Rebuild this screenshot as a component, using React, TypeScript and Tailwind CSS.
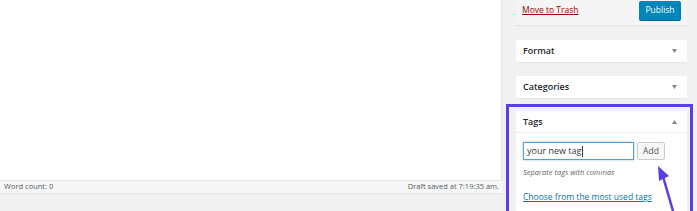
import React from 'react';

const font = { fontFamily: '"Open Sans", "Noto Sans", sans-serif' };

function Caret({ up = false }: { up?: boolean }) {
  return (
    <svg width="5" height="4" viewBox="0 0 5 4" className="text-[#82878c]">
      {up ? <path d="M0 4 L2.5 0 L5 4 Z" fill="currentColor" /> : <path d="M0 0 L5 0 L2.5 4 Z" fill="currentColor" />}
    </svg>
  );
}

function Box({ title, up = false }: { title: string; up?: boolean }) {
  return (
    <div className="bg-white h-[22px] flex items-center justify-between pl-[7px] pr-[10px] shadow-[0_1px_1px_rgba(0,0,0,0.04)]">
      <span className="text-[9px] font-semibold text-[#23282d]">{title}</span>
      <Caret up={up} />
    </div>
  );
}

export default function App() {
  return (
    <div className="w-[697px] h-[211px] overflow-hidden bg-[#f1f1f1] flex" style={font}>
      {/* Editor column */}
      <div className="w-[502px] flex flex-col">
        <div className="h-[180px] bg-white border-r border-[#e5e5e5]" />
        <div className="h-[14px] bg-[#f7f7f7] border-y border-[#e5e5e5] flex items-center justify-between pl-[4px] pr-[3px] text-[7.5px] text-[#555d66]">
          <span>Word count: 0</span>
          <span>Draft saved at 7:19:35 am.</span>
        </div>
      </div>

      {/* Sidebar */}
      <div className="flex-1 pl-[14px] pr-[10px] flex flex-col">
        <div className="h-[26px] bg-[#f5f5f5] border-b border-[#e2e2e2] flex items-center justify-between pl-[6px] pr-[6px]">
          <span className="text-[8.5px] text-[#a00] underline mt-[-4px]">Move to Trash</span>
          <button className="h-[19px] w-[42px] bg-[#0085ba] rounded-[2px] text-white text-[8.5px] mt-[-5px] shadow-[0_1px_0_#006799]">
            Publish
          </button>
        </div>

        <div className="mt-[14px]">
          <Box title="Format" />
        </div>
        <div className="mt-[14px]">
          <Box title="Categories" />
        </div>

        {/* Highlighted tags box */}
        <div className="mt-[6px] -ml-[10px] -mr-[6px] border-[3px] border-b-0 border-[#5b3ee6] pt-[4px] pl-[7px] pr-[3px] flex-1">
          <div className="bg-white h-full relative">
            <div className="h-[22px] flex items-center justify-between pl-[7px] pr-[10px] border-b border-[#eee]">
              <span className="text-[9px] font-semibold text-[#23282d]">Tags</span>
              <Caret up />
            </div>
            <div className="pl-[7px] pt-[9px]">
              <div className="flex items-center gap-[3px]">
                <div className="w-[111px] h-[18px] border border-[#5b9dd9] shadow-[0_0_2px_rgba(30,140,190,0.5)] flex items-center pl-[3px] text-[9px] text-[#32373c]">
                  your new tag<span className="w-px h-[11px] bg-[#32373c] ml-px" />
                </div>
                <button className="w-[28px] h-[18px] border border-[#ccc] bg-[#f7f7f7] rounded-[2px] text-[8.5px] text-[#555]">
                  Add
                </button>
              </div>
              <div className="mt-[7px] text-[7.5px] italic text-[#666]">Separate tags with commas</div>
              <div className="mt-[13px] text-[8.5px] text-[#0073aa] underline">Choose from the most used tags</div>
            </div>
            {/* annotation arrow */}
            <svg className="absolute left-[140px] top-[54px]" width="24" height="50" viewBox="0 0 24 50">
              <line x1="6" y1="8" x2="17" y2="46" stroke="#5b3ee6" strokeWidth="2.5" strokeLinecap="round" />
              <path d="M2 1 L13 11 L3 16 Z" fill="#5b3ee6" />
            </svg>
          </div>
        </div>
      </div>
    </div>
  );
}
